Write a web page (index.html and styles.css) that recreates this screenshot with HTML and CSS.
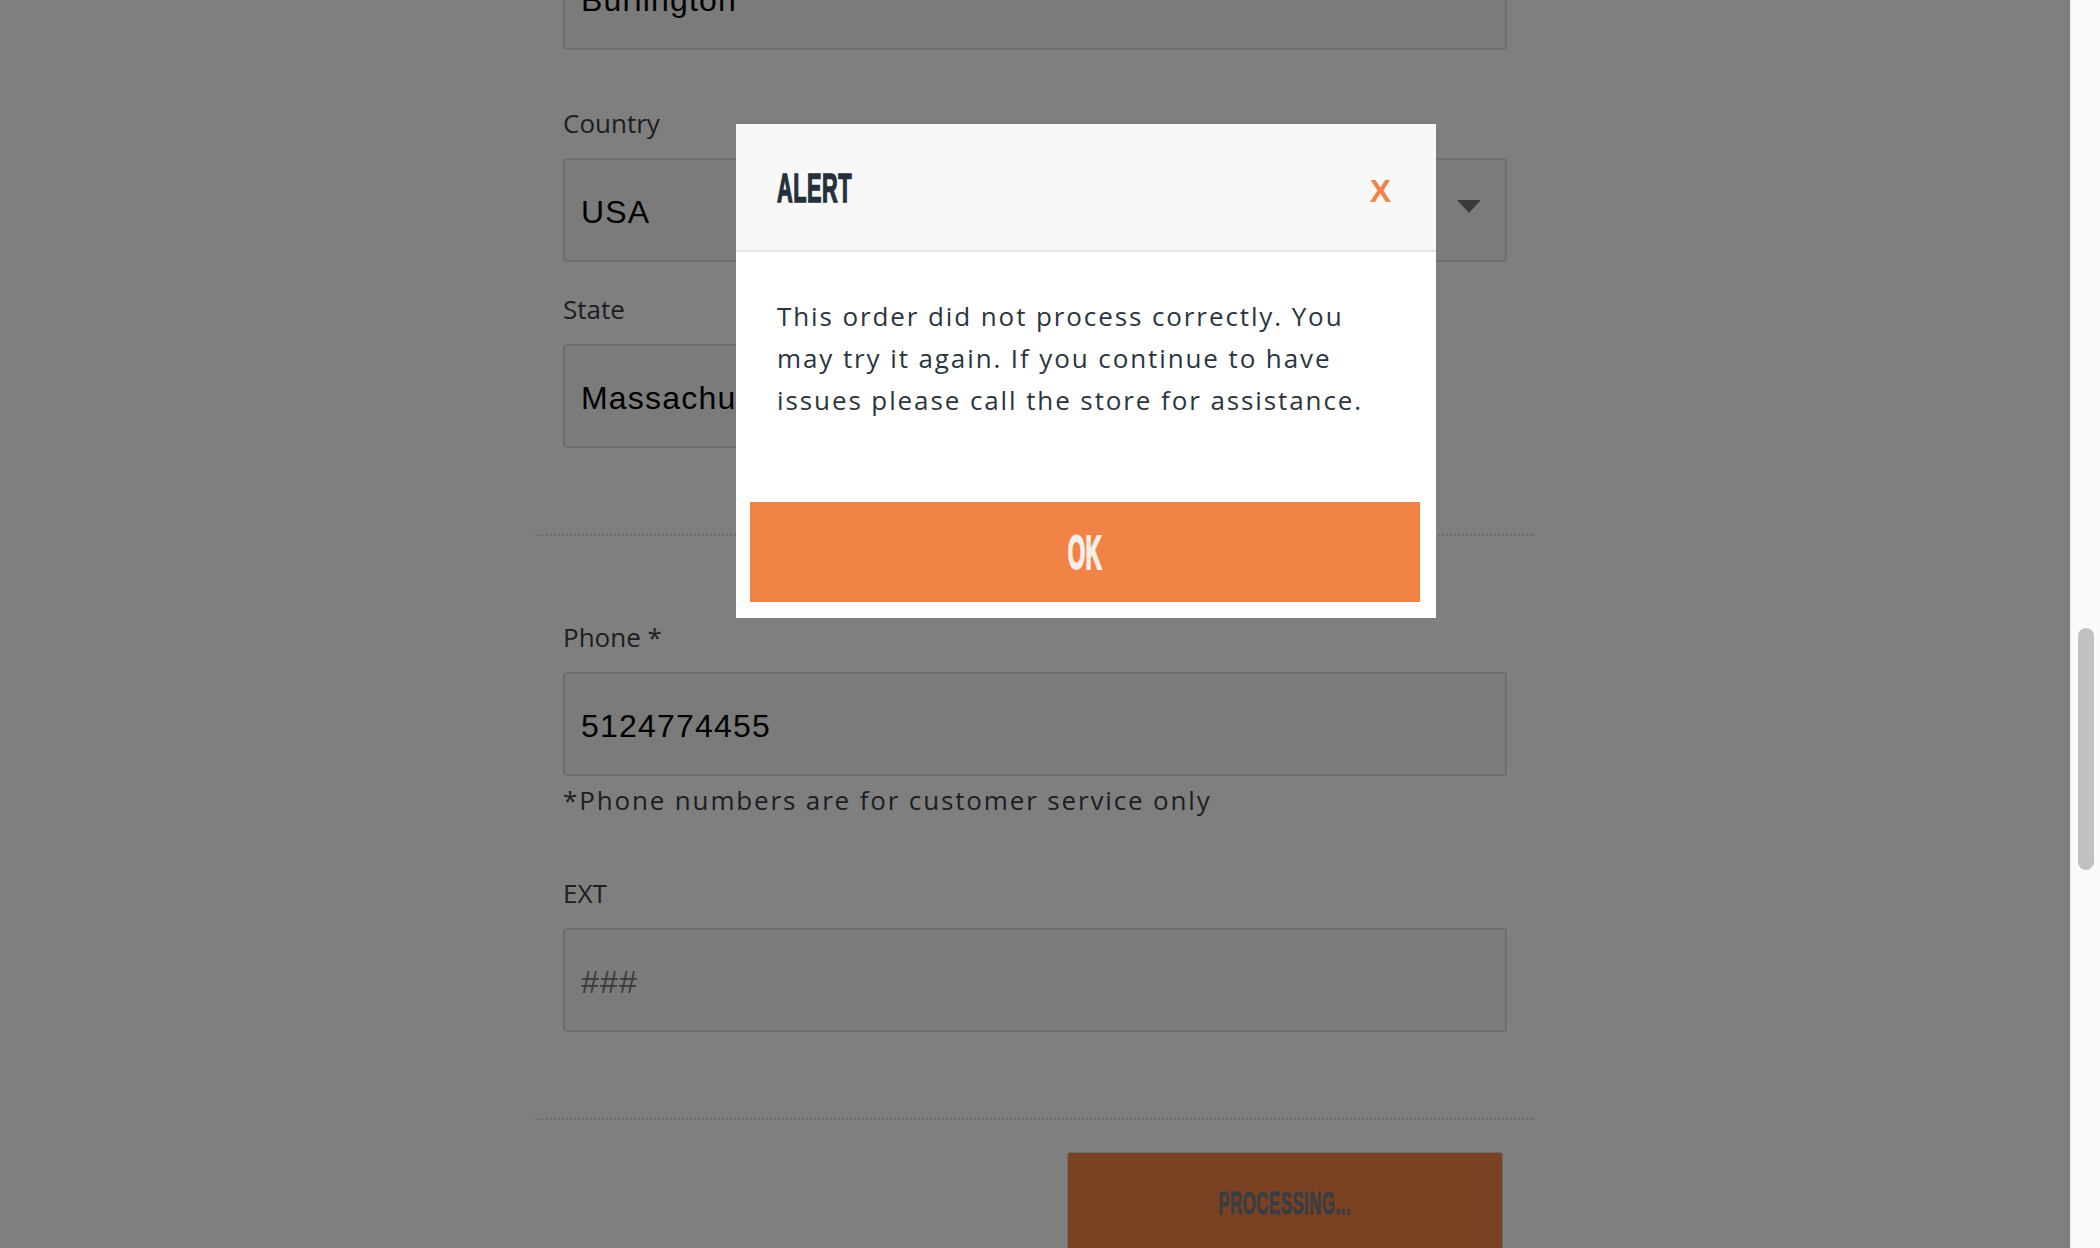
FILE: index.html
```html
<!DOCTYPE html>
<html lang="en">
<head>
<meta charset="utf-8">
<title>Checkout</title>
<link rel="stylesheet" href="styles.css">
</head>
<body>
<div class="window">
  <main class="viewport">
    <div class="page">
      <section class="section section-address">
        <div class="field field-city">
          <label class="label">City</label>
          <input class="input" type="text" value="Burlington">
        </div>
        <div class="field">
          <label class="label">Country</label>
          <div class="select">
            <span class="select-value">USA</span>
            <svg class="caret" width="24" height="13" viewBox="0 0 24 13"><polygon points="0,0 24,0 12,13" fill="currentColor"/></svg>
          </div>
        </div>
        <div class="field field-last field-half">
          <label class="label">State</label>
          <div class="select">
            <span class="select-value">Massachusetts</span>
            <svg class="caret" width="24" height="13" viewBox="0 0 24 13"><polygon points="0,0 24,0 12,13" fill="currentColor"/></svg>
          </div>
        </div>
      </section>
      <section class="section section-contact">
        <div class="field field-phone">
          <label class="label">Phone *</label>
          <input class="input" type="text" value="5124774455">
          <div class="help">*Phone numbers are for customer service only</div>
        </div>
        <div class="field field-last">
          <label class="label">EXT</label>
          <input class="input" type="text" placeholder="###">
        </div>
      </section>
      <div class="actions">
        <button class="btn-processing" type="button"><span class="condensed processing-text">PROCESSING...</span></button>
      </div>
    </div>

    <div class="overlay">
      <div class="modal">
        <div class="modal-header">
          <h2 class="modal-title"><span class="condensed title-text">ALERT</span></h2>
          <span class="modal-close">X</span>
        </div>
        <div class="modal-body">
          <p>This order did not process correctly. You may try it again. If you continue to have issues please call the store for assistance.</p>
        </div>
        <div class="modal-footer">
          <button class="btn-ok" type="button"><span class="condensed ok-text">OK</span></button>
        </div>
      </div>
    </div>
  </main>
  <div class="scrollbar"><div class="scrollbar-thumb"></div></div>
</div>
</body>
</html>
```

FILE: styles.css
```css
* { box-sizing: border-box; }

html, body {
  margin: 0;
  padding: 0;
  height: 100%;
  overflow: hidden;
}

body {
  font-family: "Open Sans", "DejaVu Sans", sans-serif;
  background: #ffffff;
  color: #3b4148;
}

.window {
  display: flex;
  height: 100vh;
}

.viewport {
  flex: 1;
  position: relative;
  overflow: hidden;
  background: #ffffff;
}

.page {
  width: 1000px;
  margin: -107px auto 0;
}

.section {
  padding: 0 28px 86px;
  border-bottom: 2px dotted #d8d8d8;
}

.section-contact {
  padding-top: 83px;
}

.field {
  margin-bottom: 29px;
}

.field-city {
  margin-bottom: 55px;
}

.field-phone {
  margin-bottom: 57px;
}

.field-last {
  margin-bottom: 0;
}

.field-half {
  width: 50%;
}

.label {
  display: block;
  font-size: 26px;
  line-height: 36px;
  margin-bottom: 17px;
  color: #383e45;
}

.input,
.select {
  display: block;
  width: 100%;
  height: 104px;
  border: 2px solid #dcdcdc;
  border-radius: 4px;
  background: #f6f6f6;
  padding: 4px 16px 0;
  font-family: "Liberation Sans", Arial, sans-serif;
  font-size: 32px;
  letter-spacing: 1.2px;
  color: #000000;
  outline: none;
  margin: 0;
}

.input::placeholder {
  color: #787878;
  opacity: 1;
}

.select {
  display: flex;
  align-items: center;
  justify-content: space-between;
}

.caret {
  color: #72787f;
  margin-right: 8px;
  margin-bottom: 11px;
}

.help {
  margin-top: 6px;
  font-size: 26px;
  line-height: 36px;
  letter-spacing: 1.85px;
  color: #383e45;
}

.actions {
  display: flex;
  justify-content: flex-end;
  padding: 32px 32px 0 0;
}

.btn-processing {
  width: 436px;
  height: 100px;
  border: 1px solid #dcdcdc;
  border-radius: 3px;
  background: #f48444;
  color: #747a82;
  display: flex;
  align-items: center;
  justify-content: center;
  padding: 0;
  margin: 0;
}

.condensed {
  display: inline-block;
  font-family: "Liberation Sans", Arial, sans-serif;
  font-weight: bold;
  line-height: 1;
  white-space: nowrap;
}

.processing-text {
  font-size: 31px;
  -webkit-text-stroke: 1px currentColor;
  transform: scaleX(0.54);
  transform-origin: center;
  letter-spacing: 1px;
  margin-top: 2px;
}

/* Overlay + modal */
.overlay {
  position: absolute;
  inset: 0;
  background: rgba(0, 0, 0, 0.5);
}

.modal {
  width: 700px;
  margin: 124px 0 0 736px;
  background: #ffffff;
}

.modal-header {
  height: 128px;
  background: #f8f8f8;
  border-bottom: 2px solid #e3e3e3;
  display: flex;
  align-items: center;
  justify-content: space-between;
  padding: 0 45px 0 41px;
}

.modal-title {
  margin: 0;
  font-size: 41px;
  line-height: 1;
  color: #25303a;
  font-weight: bold;
}

.title-text {
  font-size: 41px;
  -webkit-text-stroke: 1.5px currentColor;
  transform: scaleX(0.53);
  transform-origin: left center;
  letter-spacing: 1px;
}

.modal-close {
  font-family: "Liberation Sans", Arial, sans-serif;
  font-weight: bold;
  font-size: 32px;
  line-height: 1;
  color: #f18347;
  margin-top: 7px;
}

.modal-body {
  padding: 43px 41px 81px;
}

.modal-body p {
  margin: 0;
  font-size: 26px;
  line-height: 42px;
  letter-spacing: 1.9px;
  color: #2b3540;
}

.modal-footer {
  padding: 0 16px 16px 14px;
}

.btn-ok {
  display: flex;
  align-items: center;
  justify-content: center;
  width: 100%;
  height: 100px;
  border: 0;
  border-radius: 0;
  background: #f18347;
  color: #f7eee6;
  padding: 0;
  margin: 0;
}

.ok-text {
  font-size: 49px;
  -webkit-text-stroke: 2px currentColor;
  transform: scaleX(0.46);
  transform-origin: center;
}

/* Scrollbar */
.scrollbar {
  width: 30px;
  flex: none;
  background: #fafafa;
  border-left: 1px solid #ebebeb;
  padding: 628px 0 0 7px;
}

.scrollbar-thumb {
  width: 16px;
  height: 242px;
  border-radius: 8px;
  background: #c1c1c1;
}
```
